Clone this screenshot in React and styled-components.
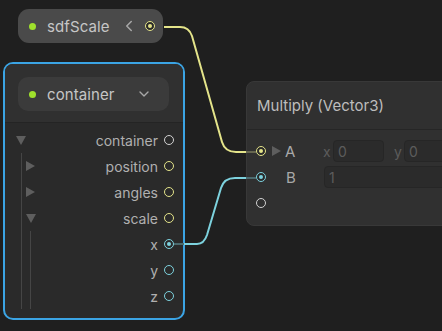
import styled, { createGlobalStyle } from "styled-components"
import { ChevronLeft, ChevronDown } from "lucide-react"

const Global = createGlobalStyle`
  html, body { margin: 0; padding: 0; background: #1f1f1f; }
  body { font-family: Inter, "Noto Sans", "Liberation Sans", sans-serif; }
`

const colors = {
  yellow: "#e4e48a",
  cyan: "#7dd2de",
  white: "#d2d2d2",
  green: "#9fe02c",
}

export default function App() {
  return (
    <>
      <Global />
      <Canvas>
        <VarNode style={{ left: 18, top: 9 }}>
          <Dot />
          <Title>sdfScale</Title>
          <ChevronLeft size={18} color="#a8a8a8" strokeWidth={2} style={{ marginLeft: 10 }} />
          <Port $color={colors.yellow} $filled style={{ marginLeft: 7 }} />
        </VarNode>

        <ContainerNode style={{ left: 3, top: 62 }}>
          <ContainerHeader>
            <Pill>
              <Dot />
              <Title>container</Title>
              <ChevronDown size={16} color="#a8a8a8" strokeWidth={2} style={{ marginLeft: 21 }} />
            </Pill>
          </ContainerHeader>
          <TreeBody>
            <TreeRow>
              <Toggle $open />
              <Label>container</Label>
              <Port $color={colors.white} />
            </TreeRow>
            <Group $indent={5}>
              <TreeRow $pad={4}>
                <Toggle />
                <Label>position</Label>
                <Port $color={colors.yellow} />
              </TreeRow>
              <TreeRow $pad={4}>
                <Toggle />
                <Label>angles</Label>
                <Port $color={colors.yellow} />
              </TreeRow>
              <TreeRow $pad={4}>
                <Toggle $open />
                <Label>scale</Label>
                <Port $color={colors.yellow} />
              </TreeRow>
              <Group $indent={8}>
                <TreeRow>
                  <Label>x</Label>
                  <Port $color={colors.cyan} $filled />
                </TreeRow>
                <TreeRow>
                  <Label>y</Label>
                  <Port $color={colors.cyan} />
                </TreeRow>
                <TreeRow>
                  <Label>z</Label>
                  <Port $color={colors.cyan} />
                </TreeRow>
              </Group>
            </Group>
          </TreeBody>
        </ContainerNode>

        <OpNode style={{ left: 246, top: 81 }}>
          <OpHeader>Multiply (Vector3)</OpHeader>
          <OpBody>
            <OpRow>
              <Port $color={colors.yellow} $filled />
              <Toggle style={{ marginLeft: 6 }} />
              <OpLabel>A</OpLabel>
              <AxisLabel>x</AxisLabel>
              <Field $w={51}>0</Field>
              <AxisLabel style={{ marginLeft: 10 }}>y</AxisLabel>
              <Field $w={60}>0</Field>
            </OpRow>
            <OpRow>
              <Port $color={colors.cyan} $filled />
              <Spacer />
              <OpLabel>B</OpLabel>
              <Field $w={140}>1</Field>
            </OpRow>
            <OpRow>
              <Port $color={colors.white} />
            </OpRow>
          </OpBody>
        </OpNode>

        <Wires width="442" height="331">
          <path d="M164 27 L180 27 Q189 27 192 36 L222 142 Q225 152 236 152 L246 152" stroke={colors.yellow} />
          <path d="M246 152 L256 152" stroke="#66664f" />
          <path d="M174 244 L184 244" stroke="#4b6a6e" />
          <path d="M184 244 L197 244 Q204 244 207 235 L221 188 Q224 178 235 178 L246 178" stroke={colors.cyan} />
          <path d="M246 178 L256 178" stroke="#4b6a6e" />
        </Wires>
      </Canvas>
    </>
  )
}

const Canvas = styled.div`
  position: relative;
  width: 442px;
  height: 331px;
  overflow: hidden;
  background: #1f1f1f;
`

const Wires = styled.svg`
  position: absolute;
  left: 0;
  top: 0;
  pointer-events: none;
  fill: none;

  path {
    stroke-width: 2;
    stroke-linecap: butt;
  }
`

const VarNode = styled.div`
  position: absolute;
  display: flex;
  align-items: center;
  box-sizing: border-box;
  width: 145px;
  height: 34px;
  padding: 0 8px 0 11px;
  background: #4a4a4a;
  border-radius: 11px;
`

const Dot = styled.span`
  width: 7px;
  height: 7px;
  border-radius: 50%;
  background: ${colors.green};
  flex: none;
`

const Title = styled.span`
  margin-left: 11px;
  font-size: 15px;
  color: #c6c6c6;
  letter-spacing: 0.1px;
`

const Port = styled.span`
  flex: none;
  box-sizing: border-box;
  width: 10px;
  height: 10px;
  border-radius: 50%;
  border: 1.6px solid ${p => p.$color};
  background: ${p => (p.$filled ? "#2a2a2a" : "transparent")};
  display: flex;
  align-items: center;
  justify-content: center;

  &::after {
    content: "";
    display: ${p => (p.$filled ? "block" : "none")};
    width: 4px;
    height: 4px;
    border-radius: 50%;
    background: ${p => p.$color};
  }
`

const ContainerNode = styled.div`
  position: absolute;
  box-sizing: border-box;
  width: 182px;
  height: 258px;
  border: 2px solid #3ba4e4;
  border-radius: 10px;
  background: #2a2a2a;
  overflow: hidden;
`

const ContainerHeader = styled.div`
  box-sizing: border-box;
  height: 59px;
  padding: 13px 14px 0 13px;
  background: #303030;
  border-bottom: 1px solid #242424;
`

const Pill = styled.div`
  display: flex;
  align-items: center;
  box-sizing: border-box;
  height: 34px;
  padding-left: 11px;
  background: #3b3b3b;
  border-radius: 10px;
`

const TreeBody = styled.div`
  padding: 4px 9px 9px 11px;
`

const Group = styled.div`
  margin-left: ${p => p.$indent}px;
  border-left: 1px solid #454545;
`

const TreeRow = styled.div`
  display: flex;
  align-items: center;
  height: 26px;
  padding-left: ${p => p.$pad || 0}px;
`

const Toggle = styled.span`
  flex: none;
  width: 0;
  height: 0;
  ${p =>
    p.$open
      ? `border-left: 5px solid transparent;
         border-right: 5px solid transparent;
         border-top: 9px solid #5e5e5e;`
      : `border-top: 5px solid transparent;
         border-bottom: 5px solid transparent;
         border-left: 9px solid #5e5e5e;`}
`

const Label = styled.span`
  margin-left: auto;
  margin-right: 6px;
  font-size: 14px;
  color: #b0b0b0;
`

const OpNode = styled.div`
  position: absolute;
  box-sizing: border-box;
  width: 230px;
  height: 145px;
  background: #303030;
  border: 1px solid #383838;
  border-radius: 8px;
`

const OpHeader = styled.div`
  box-sizing: border-box;
  height: 48px;
  padding-left: 10px;
  display: flex;
  align-items: center;
  font-size: 15px;
  color: #bdbdbd;
  border-bottom: 1px solid #262626;
`

const OpBody = styled.div`
  padding: 8px 0 0 9px;
`

const OpRow = styled.div`
  display: flex;
  align-items: center;
  height: 26px;
`

const Spacer = styled.span`
  width: 16px;
`

const OpLabel = styled.span`
  width: 38px;
  margin-left: 4px;
  font-size: 15px;
  color: #a8a8a8;
`

const AxisLabel = styled.span`
  width: 10px;
  font-size: 14px;
  color: #5c5c5c;
`

const Field = styled.span`
  flex: none;
  box-sizing: border-box;
  width: ${p => p.$w}px;
  height: 22px;
  padding-left: 4px;
  display: flex;
  align-items: center;
  background: #2b2b2b;
  border: 1px solid #262626;
  border-radius: 4px;
  font-size: 14px;
  color: #5c5c5c;
`
